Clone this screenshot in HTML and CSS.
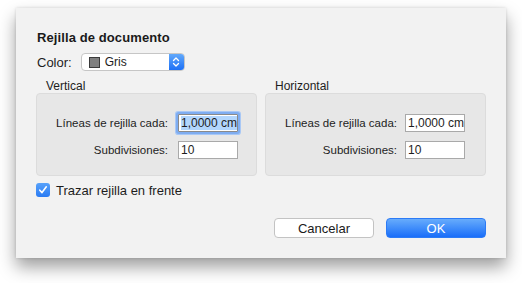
FILE: index.html
```html
<!DOCTYPE html>
<html lang="es">
<head>
    <meta charset="UTF-8">
    <title>Rejilla de documento</title>
    <link rel="stylesheet" href="styles.css">
</head>
<body>
    <div class="dialog">
        <h1 class="title">Rejilla de documento</h1>

        <div class="color-row">
            <span class="color-label">Color:</span>
            <div class="popup">
                <span class="swatch"></span>
                <span class="popup-text">Gris</span>
                <span class="stepper">
                    <svg width="8" height="12" viewBox="0 0 8 12">
                        <path d="M1.5 4.5 L4 2 L6.5 4.5 M1.5 7.5 L4 10 L6.5 7.5" fill="none" stroke="#fff" stroke-width="1.3" stroke-linecap="round" stroke-linejoin="round"/>
                    </svg>
                </span>
            </div>
        </div>

        <div class="groups">
            <div class="group">
                <div class="group-label">Vertical</div>
                <div class="group-box group-box-left">
                    <div class="field">
                        <span class="field-label">Líneas de rejilla cada:</span>
                        <span class="input focused"><span class="selected">1,0000 cm</span></span>
                    </div>
                    <div class="field">
                        <span class="field-label">Subdivisiones:</span>
                        <span class="input">10</span>
                    </div>
                </div>
            </div>
            <div class="group">
                <div class="group-label">Horizontal</div>
                <div class="group-box group-box-right">
                    <div class="field">
                        <span class="field-label">Líneas de rejilla cada:</span>
                        <span class="input">1,0000 cm</span>
                    </div>
                    <div class="field">
                        <span class="field-label">Subdivisiones:</span>
                        <span class="input">10</span>
                    </div>
                </div>
            </div>
        </div>

        <label class="check-row">
            <span class="checkbox">
                <svg width="10" height="10" viewBox="0 0 10 10">
                    <path d="M1.8 5.2 L4 7.6 L8.3 1.8" fill="none" stroke="#fff" stroke-width="1.6" stroke-linecap="round" stroke-linejoin="round"/>
                </svg>
            </span>
            <span>Trazar rejilla en frente</span>
        </label>

        <div class="buttons">
            <button class="btn">Cancelar</button>
            <button class="btn btn-primary">OK</button>
        </div>
    </div>
</body>
</html>
```

FILE: styles.css
```css
* {
    margin: 0;
    padding: 0;
    box-sizing: border-box;
}

body {
    font-family: 'Liberation Sans', Arial, sans-serif;
    background: #fff;
    color: #1d1d1d;
    min-height: 283px;
}

.dialog {
    width: 490px;
    height: 250px;
    margin: 8px 0 0 16px;
    padding: 22px 20px 20px 20px;
    background: #f2f2f2;
    box-shadow: 0 9px 16px rgba(0, 0, 0, 0.38), 0 0 3px rgba(0, 0, 0, 0.14);
    display: flex;
    flex-direction: column;
}

.title {
    font-size: 13px;
    font-weight: bold;
    line-height: 16px;
    padding-left: 1px;
    color: #1a1a1a;
    letter-spacing: 0.1px;
}

.color-row {
    display: flex;
    align-items: center;
    gap: 9px;
    margin-top: 7px;
    height: 18px;
    padding-left: 1px;
}

.color-label {
    font-size: 13px;
}

.popup {
    width: 104px;
    height: 18px;
    display: flex;
    align-items: center;
    background: #fff;
    border: 1px solid #c6c6c6;
    border-radius: 4px;
    overflow: hidden;
}

.swatch {
    width: 11px;
    height: 11px;
    margin-left: 7px;
    background: #7f7f7f;
    border: 1px solid #3a3a3a;
}

.popup-text {
    font-size: 12px;
    margin-left: 5px;
    flex: 1;
}

.stepper {
    width: 15px;
    height: 100%;
    background: linear-gradient(#62a9fb, #1d70f6);
    display: flex;
    align-items: center;
    justify-content: center;
}

.groups {
    display: flex;
    gap: 8px;
    margin-top: 9px;
}

.group {
    width: 221px;
}

.group-label {
    font-size: 12px;
    line-height: 13px;
    height: 13px;
    padding-left: 10px;
}

.group-box {
    height: 83px;
    background: #e7e7e7;
    border: 1px solid #dcdcdc;
    border-radius: 4px;
    padding-top: 20px;
    display: flex;
    flex-direction: column;
    align-items: flex-end;
    gap: 9px;
}

.group-box-left {
    padding-right: 18px;
}

.group-box-right {
    padding-right: 20px;
}

.field {
    display: flex;
    align-items: center;
    gap: 10px;
    height: 18px;
}

.group-box-right .field {
    gap: 8px;
}

.field-label {
    font-size: 11.5px;
}

.input {
    width: 60px;
    height: 18px;
    background: #fff;
    border: 1px solid #a9a9a9;
    font-size: 12px;
    line-height: 16px;
    padding-left: 2px;
    white-space: nowrap;
    overflow: hidden;
}

.input.focused {
    border-color: #8a8a8a;
    box-shadow: 0 0 0 2px #7fadf1, 0 0 0 3px #a9c8f5;
    border-radius: 1px;
    overflow: visible;
}

.selected {
    background: #b2d6fd;
}

.check-row {
    display: flex;
    align-items: center;
    gap: 6px;
    margin-top: 7px;
    font-size: 13px;
    height: 14px;
}

.checkbox {
    width: 14px;
    height: 14px;
    border-radius: 3px;
    background: linear-gradient(#58a2fa, #2a7bf3);
    display: flex;
    align-items: center;
    justify-content: center;
}

.buttons {
    display: flex;
    justify-content: flex-end;
    gap: 12px;
    margin-top: 21px;
}

.btn {
    width: 100px;
    height: 20px;
    font-family: inherit;
    font-size: 13px;
    background: #fff;
    border: 1px solid #c3c3c3;
    border-radius: 4px;
    color: #1a1a1a;
}

.btn-primary {
    background: linear-gradient(#67acfc, #1a6ef9);
    border-color: #2c7bf6;
    color: #fff;
}
```
